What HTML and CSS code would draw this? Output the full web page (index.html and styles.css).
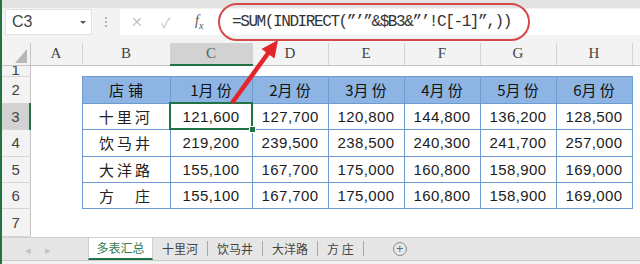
FILE: index.html
```html
<!DOCTYPE html>
<html lang="zh-CN">
<head>
  <meta charset="UTF-8">
  <title>多表汇总</title>
  <link rel="stylesheet" href="styles.css">
</head>
<body>
<div class="app">

  <div class="ribbon"></div>

  <!-- formula bar -->
  <div class="fbar">
    <div class="namebox"><span>C3</span><i class="caret"></i></div>
    <div class="grip"><i></i><i></i><i></i></div>
    <div class="fbtns">
      <span class="btn">✕</span>
      <span class="btn">✓</span>
      <span class="fx"><i>f</i><sub>x</sub></span>
    </div>
    <div class="finput">=SUM(INDIRECT(”’”&amp;$B3&amp;”’!C[-1]”,))</div>
  </div>

  <!-- worksheet -->
  <table class="sheet">
    <colgroup>
      <col class="w-row"><col class="w-a"><col class="w-b"><col class="w-c">
      <col class="w-n"><col class="w-n"><col class="w-n"><col class="w-n"><col class="w-n">
      <col class="w-i">
    </colgroup>
    <tr class="hdr">
      <th class="corner"><i class="tri"></i></th>
      <th>A</th><th>B</th><th class="sel-col">C</th><th>D</th><th>E</th><th>F</th><th>G</th><th>H</th><th></th>
    </tr>
    <tr class="r1">
      <th class="num"><div class="clip"><span>1</span></div></th>
      <td></td><td></td><td></td><td></td><td></td><td></td><td></td><td></td><td></td>
    </tr>
    <tr class="r2">
      <th class="num">2</th><td></td>
      <td class="t t-head t-first">店铺</td>
      <td class="t t-head">1月 份</td>
      <td class="t t-head">2月 份</td>
      <td class="t t-head">3月 份</td>
      <td class="t t-head">4月 份</td>
      <td class="t t-head">5月 份</td>
      <td class="t t-head">6月 份</td>
      <td></td>
    </tr>
    <tr class="r3">
      <th class="num sel-row">3</th><td></td>
      <td class="t t-first name">十里河</td>
      <td class="t active"><div class="cellbox">121,600<i class="handle"></i></div></td>
      <td class="t">127,700</td><td class="t">120,800</td><td class="t">144,800</td>
      <td class="t">136,200</td><td class="t">128,500</td><td></td>
    </tr>
    <tr class="r4">
      <th class="num">4</th><td></td>
      <td class="t t-first name">饮马井</td>
      <td class="t">219,200</td><td class="t">239,500</td><td class="t">238,500</td>
      <td class="t">240,300</td><td class="t">241,700</td><td class="t">257,000</td><td></td>
    </tr>
    <tr class="r5">
      <th class="num">5</th><td></td>
      <td class="t t-first name">大洋路</td>
      <td class="t">155,100</td><td class="t">167,700</td><td class="t">175,000</td>
      <td class="t">160,800</td><td class="t">158,900</td><td class="t">169,000</td><td></td>
    </tr>
    <tr class="r6">
      <th class="num">6</th><td></td>
      <td class="t t-first name">方　庄</td>
      <td class="t">155,100</td><td class="t">167,700</td><td class="t">175,000</td>
      <td class="t">160,800</td><td class="t">158,900</td><td class="t">169,000</td><td></td>
    </tr>
    <tr class="r7">
      <th class="num">7</th>
      <td></td><td></td><td></td><td></td><td></td><td></td><td></td><td></td><td></td>
    </tr>
  </table>

  <!-- sheet tabs -->
  <div class="tabs">
    <div class="nav"><span class="arr">◂</span><span class="arr">▸</span></div>
    <div class="tab on">多表汇总</div>
    <div class="tab">十里河</div><i class="sep"></i>
    <div class="tab">饮马井</div><i class="sep"></i>
    <div class="tab">大洋路</div><i class="sep"></i>
    <div class="tab">方 庄</div><i class="sep"></i>
    <div class="add">+</div>
  </div>
  <div class="status"></div>

  <!-- annotation drawn over the screenshot -->
  <svg class="marks" width="640" height="264" viewBox="0 0 640 264">
    <rect x="219" y="4" width="310" height="36" rx="18" ry="18" fill="none" stroke="#d4494a" stroke-width="2"/>
    <line x1="232" y1="103" x2="269" y2="52" stroke="#e3262b" stroke-width="4.5"/>
    <polygon points="278,40 274.5,58.5 261.5,49" fill="#e3262b"/>
  </svg>

</div>
</body>
</html>
```

FILE: styles.css
```css
body {
  margin: 0;
  background: #fff;
  font-family: "Liberation Sans", "Noto Sans CJK SC", sans-serif;
}
.app {
  position: relative;
  width: 638px;
  height: 264px;
  overflow: hidden;
  border-left: 2px solid #217346;
  background: #fff;
}
/* === Formula bar === */
.ribbon {
  height: 8px;
  background: #e3e3e3;
}
.fbar {
  display: flex;
  height: 35px;
  box-sizing: border-box;
  padding: 1px 0 8px;
  background: #f3f3f3;
}
.namebox {
  display: flex;
  align-items: center;
  justify-content: space-between;
  width: 87px;
  margin-left: 3px;
  padding: 0 5px 0 6px;
  box-sizing: border-box;
  background: #fff;
  border: 1px solid #e2e2e2;
  font-size: 16px;
  color: #444;
}
.caret {
  width: 0; height: 0;
  border-left: 3px solid transparent;
  border-right: 3px solid transparent;
  border-top: 3px solid #555;
}
.grip {
  display: flex;
  flex-direction: column;
  align-items: center;
  justify-content: center;
  gap: 2px;
  width: 28px;
}
.grip i {
  width: 2px; height: 2px;
  background: #b5b5b5;
}
.fbtns {
  display: flex;
  align-items: center;
  width: 93px;
  padding-left: 11px;
  box-sizing: border-box;
  background: #fff;
}
.fbtns .btn {
  width: 30px;
  font-size: 14px;
  color: #c4c4c4;
}
.fbtns .fx {
  margin-left: 4px;
  font-family: "Liberation Serif", serif;
  font-size: 14px;
  color: #555;
}
.fbtns .fx sub {
  font-size: 10px;
  font-style: italic;
}
.finput {
  flex: 1;
  display: flex;
  align-items: center;
  padding-left: 19px;
  background: #fff;
  font-family: "Liberation Mono", monospace;
  font-size: 16px;
  letter-spacing: -1.4px;
  color: #333;
}
/* === Worksheet grid === */
.sheet {
  border-collapse: collapse;
  table-layout: fixed;
  width: 638px;
}
.sheet td, .sheet th {
  padding: 0;
  text-align: center;
  font-weight: normal;
}
.w-row { width: 28px; }
.w-a { width: 52px; }
.w-b { width: 88px; }
.w-c { width: 82px; }
.w-n { width: 76px; }
.w-i { width: 8px; }
.hdr { height: 22px; }
.hdr th {
  background: #f3f3f3;
  border-right: 1px solid #d4d4d4;
  border-bottom: 1px solid #c4c4c4;
  font-family: "Liberation Serif", serif;
  font-size: 15px;
  color: #444;
}
.hdr .corner {
  border-right: 1px solid #c4c4c4;
}
.tri {
  display: block;
  width: 0; height: 0;
  margin: 4px 0 0 13px;
  border-left: 12px solid transparent;
  border-bottom: 14px solid #b8b8b8;
}
.hdr .sel-col {
  background: #d2d2d2;
  border-bottom: 2px solid #217346;
  color: #3d6b52;
}
.num {
  background: #f3f3f3;
  border-right: 1px solid #c4c4c4;
  border-bottom: 1px solid #d6d6d6;
  font-size: 15px;
  color: #444;
}
.num.sel-row {
  background: #d2d2d2;
  border-right: 2px solid #217346;
}
.r1 { height: 10px; }
.r1 .clip {
  height: 10px;
  overflow: hidden;
}
.r1 .clip span {
  display: block;
  margin-top: -7px;
  line-height: 22px;
}
.r2 { height: 27px; }
.r3 { height: 26px; }
.r4 { height: 27px; }
.r5 { height: 26px; }
.r6 { height: 26px; }
.r7 { height: 28px; }
/* === Data table === */
.t {
  border: 1px solid #6c9bd2;
  font-size: 15px;
  letter-spacing: 0.4px;
  color: #1c1c1c;
}
.t-head {
  background: #8db4e2;
  font-family: "Noto Sans CJK SC", sans-serif;
  font-weight: bold;
  font-size: 15px;
  letter-spacing: 0;
  color: #111;
}
.t-head.t-first {
  letter-spacing: 4px;
  padding-left: 4px;
}
.name {
  font-family: "Noto Sans CJK SC", sans-serif;
  letter-spacing: 3px;
  padding-left: 3px;
  color: #222;
}
.t.active {
  border: 2px solid #217346;
}
.cellbox {
  position: relative;
}
.handle {
  position: absolute;
  right: -5px;
  bottom: -8px;
  width: 5px;
  height: 5px;
  background: #217346;
  border: 1px solid #fff;
}
/* === Sheet tabs === */
.tabs {
  display: flex;
  align-items: center;
  height: 23px;
  background: #e6e6e6;
  border-top: 1px solid #d0d0d0;
  box-sizing: border-box;
  font-family: "Noto Sans CJK SC", sans-serif;
  font-size: 12px;
  color: #444;
}
.nav {
  display: flex;
  gap: 14px;
  width: 86px;
  padding-left: 23px;
  box-sizing: border-box;
  color: #c2c2c2;
  font-size: 11px;
}
.tab {
  padding: 0 9px;
  line-height: 22px;
}
.tab.on {
  width: 65px;
  box-sizing: border-box;
  padding: 0;
  text-align: center;
  background: #fff;
  color: #2f7a4f;
  border-left: 1px solid #cfcfcf;
  border-right: 1px solid #cfcfcf;
  border-bottom: 2px solid #217346;
  line-height: 20px;
  align-self: flex-start;
}
.sep {
  width: 1px;
  height: 15px;
  background: #a8a8a8;
}
.add {
  width: 12px;
  height: 12px;
  margin-left: 29px;
  border: 1px solid #8a8a8a;
  border-radius: 50%;
  font-family: "Liberation Sans", sans-serif;
  font-size: 12px;
  line-height: 12px;
  text-align: center;
  color: #666;
}
.status {
  height: 6px;
  background: #f1f1f1;
  border-top: 1px solid #cacaca;
}
/* === Annotation overlay === */
.marks {
  position: absolute;
  top: 0;
  left: -2px;
  pointer-events: none;
}
```
